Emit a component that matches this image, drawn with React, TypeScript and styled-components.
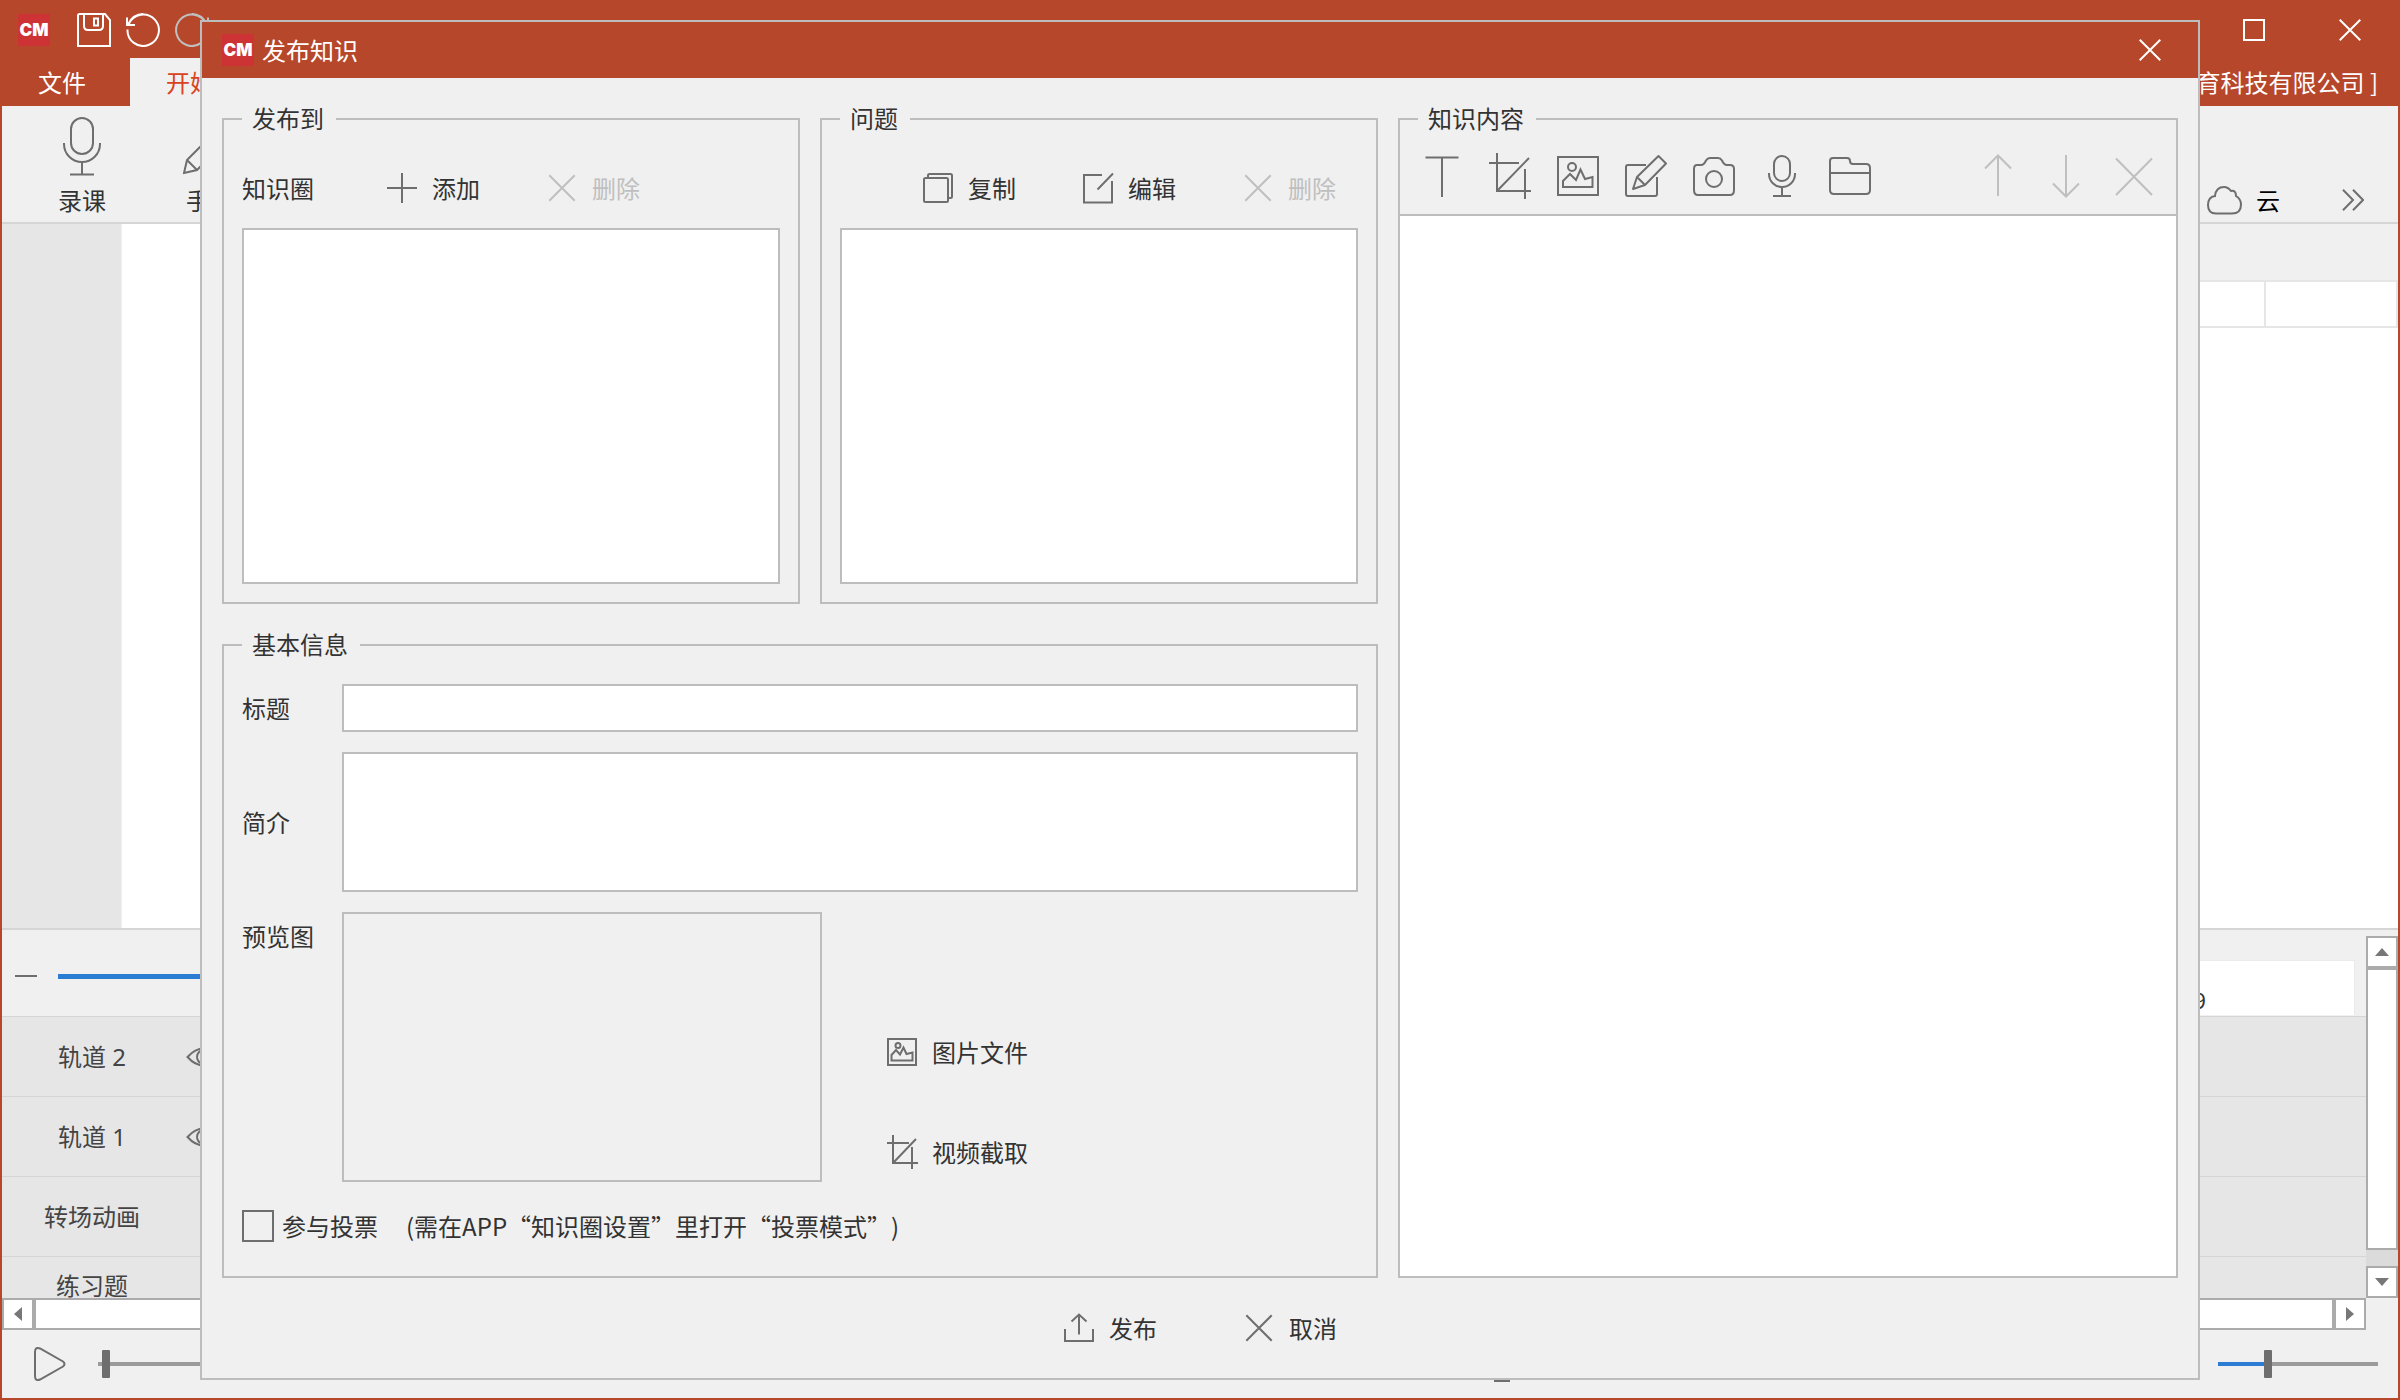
import React from "react";
import styled, { createGlobalStyle } from "styled-components";

const c = {
  brand: "#b7472a",
  logo: "#cd3234",
  panel: "#f0f0f0",
  strip: "#e6e6e6",
  line: "#d5d5d5",
  faint: "#e6e6e6",
  frame: "#bdbdbd",
  scroll: "#ababab",
  icon: "#6e6e6e",
  text: "#333333",
  muted: "#bfbfbf",
  blue: "#2b7cd3",
};

const GlobalStyle = createGlobalStyle`
  *, *::before, *::after { box-sizing: border-box; }
  body { margin: 0; overflow: hidden; }
  body, button, input, textarea {
    font-family: "Noto Sans CJK SC", "Noto Sans", sans-serif;
    font-size: 24px;
    line-height: 32px;
    color: ${c.text};
  }
  button { padding: 0; border: 0; background: none; }
`;

/* ---------- icons ---------- */

const Svg = styled.svg`
  display: block;
  flex: none;
  fill: none;
  stroke: currentColor;
  stroke-width: 2;
`;

type IconProps = { w: number; h?: number; children: React.ReactNode };
const Icon = ({ w, h = w, children }: IconProps) => (
  <Svg width={w} height={h} viewBox={`0 0 ${w} ${h}`} aria-hidden="true">
    {children}
  </Svg>
);

const SaveIcon = () => (
  <Icon w={34}>
    <path d="M1 2.5Q1 1 2.5 1H28l5 6V33H1ZM7 1V13Q7 17 11 17H22Q26 17 26 13V1M17 5.5H21V12.500H17Z" />
  </Icon>
);
const UndoIcon = () => (
  <Icon w={34}>
    <path d="M1.500 16.500A15.700 15.700 0 1 0 3 10.500M1 4.500V12H9M2 11.500Q7 1 17.200 1" />
  </Icon>
);
const RedoIcon = () => (
  <Icon w={34}>
    <path d="M32.500 16.500A15.700 15.700 0 1 1 31 10.500M33 4.500V12H25M32 11.500Q27 1 16.800 1" />
  </Icon>
);
const SmallCross = () => (
  <Icon w={22}>
    <path d="M.7.7 21.300 21.300M21.300.7.7 21.300" />
  </Icon>
);
const SquareIcon = () => (
  <Icon w={22}>
    <rect x="1" y="1" width="20" height="20" />
  </Icon>
);
const RibbonMic = () => (
  <Icon w={40} h={60}>
    <rect x="9" y="2" width="22" height="36" rx="11" />
    <path d="M2 27V28A18 18 0 0 0 38 28V27M20 46V58M8 58.500H32" />
  </Icon>
);
const RibbonPencil = () => (
  <Icon w={54} h={60}>
    <path d="M1 57 4 44 40 8Q43 5 46 8L50 12Q53 15 50 18L14 54ZM4 44 14 54" />
  </Icon>
);
const CloudIcon = () => (
  <Icon w={36} h={30}>
    <path d="M10 28.500Q2 28.500 2 20 2 12 9 11 10 2 18 2 22 2 25 6 30 5 30 11 35 14 35 19.500 35 28.500 26 28.500Z" />
  </Icon>
);
const ChevronsIcon = () => (
  <Icon w={22}>
    <path d="M1 .7 11 11 1 21.300M11 .7 21 11 11 21.300" />
  </Icon>
);
const PlusIcon = () => (
  <Icon w={32}>
    <path d="M1 16H31M16 1V31" />
  </Icon>
);
const CrossIcon = () => (
  <Icon w={32}>
    <path d="M3.300 3.300 28.700 28.700M28.700 3.300 3.300 28.700" />
  </Icon>
);
const CopyIcon = () => (
  <Icon w={32}>
    <rect x="2" y="6" width="24" height="24" rx="1.500" />
    <path d="M6 5V3.500Q6 2 7.500 2H28.500Q30 2 30 3.500V24.500Q30 26 28.500 26H27" />
  </Icon>
);
const EditIcon = () => (
  <Icon w={32}>
    <path d="M20 3H2V30.500H30V9M15.500 17.500 31 1.500" />
  </Icon>
);
const SmallPicture = () => (
  <Icon w={32}>
    <rect x="2" y="3" width="28" height="26" />
    <circle cx="12" cy="9.500" r="2.500" />
    <path d="M5.500 24.500V19L10 14 14 18.500 17.500 11.500 20.500 18 26.500 16.500V24.500Z" />
  </Icon>
);
const SmallCrop = () => (
  <Icon w={32} h={34}>
    <path d="M7 0V28H32M1 8H23M26 12V34M7 28 30 4" />
  </Icon>
);
const PublishIcon = () => (
  <Icon w={32}>
    <path d="M2 17V29H30V17M16 22.500V3M8.500 9.500 16 2.500 23.500 9.500" />
  </Icon>
);

const TextTool = () => (
  <Icon w={44}>
    <path d="M5.500 3.500H38.500M22 3V43" />
  </Icon>
);
const CropTool = () => (
  <Icon w={44} h={46}>
    <path d="M9 0V38H43M1 10H31M37 16V46M9 38 41 5" />
  </Icon>
);
const PictureTool = () => (
  <Icon w={44}>
    <rect x="2" y="3" width="40" height="38" />
    <circle cx="16" cy="13" r="4" />
    <path d="M7 33V27L14 20 20 26 24.500 15.500 29 25 36.500 23V33Z" />
  </Icon>
);
const ComposeTool = () => (
  <Icon w={44}>
    <path d="M22 11H4Q2 11 2 13V40Q2 42 4 42H31Q33 42 33 40V23" />
    <path d="M9 35 13 23 34.500 2 42 9.500 21 31ZM13 23 21 31" strokeLinejoin="round" />
  </Icon>
);
const CameraTool = () => (
  <Icon w={44}>
    <path d="M5 11H9Q12 11 14 6.500 15.500 4 18 4H26Q28.500 4 30 6.500 32 11 35 11H38Q42 11 42 15V36Q42 41 38 41H6Q2 41 2 36V15Q2 11 5 11Z" />
    <circle cx="22" cy="25" r="8" />
  </Icon>
);
const MicTool = () => (
  <Icon w={44}>
    <rect x="14" y="2" width="16" height="25" rx="8" />
    <path d="M9 19V20A13 13 0 0 0 35 20V19M22 33V42M13 42H31" />
  </Icon>
);
const FolderTool = () => (
  <Icon w={44}>
    <path d="M2 7Q2 4 5 4H19Q22 4 22 7 22 10 25 10H38Q42 10 42 14V36Q42 40 38 40H6Q2 40 2 36ZM2 19H42" />
  </Icon>
);
const UpTool = () => (
  <Icon w={44}>
    <path d="M22 42V2M9 14.500 22 1.500 35 14.500" />
  </Icon>
);
const DownTool = () => (
  <Icon w={44}>
    <path d="M22 1V41M9 29.500 22 42.500 35 29.500" />
  </Icon>
);
const CrossTool = () => (
  <Icon w={44}>
    <path d="M4 4.500 40 41M40 4.500 4 41" />
  </Icon>
);
const EyeIcon = () => (
  <Icon w={36} h={20}>
    <path d="M1.500 10Q9 1.500 18 1.500T34.500 10Q27 18.500 18 18.500T1.500 10Z" />
    <circle cx="18" cy="10" r="7" />
  </Icon>
);
const PlayIcon = () => (
  <Icon w={32} h={34}>
    <path d="M1 5Q1 -.5 6 1.500L29 14.500Q32 17 29 19.500L6 32.500Q1 34.500 1 29Z" />
  </Icon>
);
const StatusMic = () => (
  <Icon w={22} h={36}>
    <rect x="6" y="1" width="10" height="20" rx="5" />
    <path d="M2 17A9 9 0 0 0 20 17M11 26V34M3 35H19" />
  </Icon>
);
const FitIcon = () => (
  <Icon w={32} h={32}>
    <path d="M1 10V1H11M21 1H31V10M31 22V31H21M11 31H1V22" />
  </Icon>
);
const MinusIcon = () => (
  <Icon w={22}>
    <path d="M0 11H22" />
  </Icon>
);

const Triangle = ({ dir }: { dir: "up" | "down" | "left" | "right" }) => {
  const paths = {
    up: "M0 11 7 3 14 11Z",
    down: "M0 3 7 11 14 3Z",
    left: "M11 0 3 7 11 14Z",
    right: "M3 0 11 7 3 14Z",
  };
  return (
    <svg width="14" height="14" viewBox="0 0 14 14" fill="#777777" aria-hidden="true">
      <path d={paths[dir]} />
    </svg>
  );
};

/* ---------- main window ---------- */

const Window = styled.div`
  position: relative;
  display: flex;
  flex-direction: column;
  height: 100vh;
  border: 2px solid ${c.brand};
  background: ${c.panel};
  overflow: hidden;
`;

const TitleBar = styled.header`
  flex: none;
  display: flex;
  align-items: center;
  height: 56px;
  padding-left: 16px;
  background: ${c.brand};
  color: #ffffff;
`;

const Logo = styled.span`
  flex: none;
  display: flex;
  align-items: center;
  justify-content: center;
  width: 32px;
  height: 32px;
  background: ${c.logo};
  color: #ffffff;
  font-family: Inter, Roboto, sans-serif;
  font-size: 17px;
  font-weight: 900;
  line-height: 32px;
`;

const QuickActions = styled.div`
  display: flex;
  gap: 15px;
  margin-left: 27px;
`;

const IconButton = styled.button<{ $color?: string }>`
  display: flex;
  align-items: center;
  justify-content: center;
  color: ${(p) => p.$color ?? c.icon};
`;

const CaptionButtons = styled.div`
  display: flex;
  align-self: stretch;
  margin-left: auto;
`;

const CaptionButton = styled(IconButton)`
  width: 96px;
`;

const TabRow = styled.nav`
  flex: none;
  display: flex;
  height: 48px;
  background: ${c.brand};
`;

const Tab = styled.button<{ $active?: boolean }>`
  width: ${(p) => (p.$active ? 120 : 128)}px;
  padding: 0 16px 0 ${(p) => (p.$active ? 16 : 8)}px;
  background: ${(p) => (p.$active ? c.panel : "transparent")};
  color: ${(p) => (p.$active ? "#d9431e" : "#ffffff")};
`;

const Company = styled.span`
  margin-left: auto;
  padding-right: 20px;
  line-height: 48px;
  color: #ffffff;
  white-space: pre;
`;

const Ribbon = styled.div`
  flex: none;
  display: flex;
  justify-content: space-between;
  height: 118px;
  padding: 10px 34px 0 16px;
  border-bottom: 2px solid ${c.line};
`;

const RibbonGroup = styled.div`
  display: flex;
`;

const RibbonItem = styled.button`
  display: flex;
  flex-direction: column;
  align-items: center;
  gap: 8px;
  width: 128px;
  height: 100px;

  svg {
    color: ${c.icon};
  }
`;

const RibbonSide = styled.div`
  display: flex;
  align-items: flex-end;
  height: 100px;
  gap: 62px;
`;

const RibbonSideButton = styled.button`
  display: flex;
  align-items: center;
  gap: 14px;
  height: 32px;
  color: #000000;

  svg {
    color: ${c.icon};
  }
`;

const Stage = styled.main`
  flex: 1;
  min-height: 0;
  display: grid;
  grid-template-columns: 120px 1fr 480px;
`;

const Gutter = styled.div`
  background: ${c.strip};
  border-right: 1px solid ${c.panel};
`;

const Canvas = styled.div`
  background: #ffffff;
`;

const SidePane = styled.div`
  display: flex;
  flex-direction: column;
  background: #ffffff;
`;

const SideTabs = styled.div`
  height: 56px;
  background: ${c.panel};
`;

const SideHead = styled.div`
  display: grid;
  grid-template-columns: 1fr 132px;
  height: 48px;
  border: 2px solid ${c.faint};
  border-left: 0;
`;

const HeadCell = styled.div`
  & + & {
    border-left: 2px solid ${c.faint};
  }
`;

const Timeline = styled.section`
  flex: none;
  display: grid;
  grid-template-columns: 1fr 32px;
  grid-template-rows: 1fr 32px;
  height: 402px;
  border-top: 2px solid ${c.line};
`;

const TrackArea = styled.div`
  overflow: hidden;
  min-height: 0;
`;

const TrackHeader = styled.div`
  display: flex;
  align-items: center;
  height: 86px;
  padding: 6px 11px 0 13px;
  gap: 21px;
`;

const Ruler = styled.div`
  flex: 1;
  align-self: stretch;
  margin: 24px 0 1px;
  padding: 22px 148px 0 0;
  border: 1px solid #eaeaea;
  border-bottom: 0;
  background: #ffffff;
  font-size: 22px;
  text-align: right;
`;

const Track = styled.div<{ $short?: boolean }>`
  display: flex;
  align-items: center;
  height: ${(p) => (p.$short ? 58 : 80)}px;
  border-top: 1px solid ${c.line};
  background: ${c.strip};
  color: #444444;
`;

const TrackName = styled.span`
  width: 180px;
  font-family: "Noto Sans", "Noto Sans CJK SC", sans-serif;
  line-height: 24px;
  text-align: center;
`;

const EyeButton = styled(IconButton)`
  margin-left: 4px;
`;

const VScroll = styled.div`
  display: flex;
  flex-direction: column;
  margin-top: 6px;
  background: #dbdbdb;
`;

const HScroll = styled.div`
  display: flex;
`;

const ScrollButton = styled.button`
  flex: none;
  display: flex;
  align-items: center;
  justify-content: center;
  width: 32px;
  height: 32px;
  border: 2px solid ${c.scroll};
  background: #ffffff;
`;

const VThumb = styled.div`
  flex: 1;
  margin-bottom: 16px;
  border: 2px solid ${c.scroll};
  background: #ffffff;
`;

const HThumb = styled.div`
  flex: 1;
  border: 2px solid ${c.scroll};
  background: #ffffff;
`;

const StatusBar = styled.footer`
  flex: none;
  display: flex;
  align-items: center;
  height: 68px;
  padding: 0 20px 0 32px;
`;

const Spacer = styled.div`
  flex: 1;
`;

const StatusMicButton = styled(IconButton)`
  margin-right: 651px;
`;

const FitButton = styled(IconButton)`
  margin-right: 22px;
`;

const Slider = styled.input<{ $width: number; $fill: number; $hideThumb?: boolean }>`
  appearance: none;
  flex: none;
  width: ${(p) => p.$width}px;
  height: 28px;
  margin: 0;
  background: transparent;

  &::-webkit-slider-runnable-track {
    height: ${(p) => (p.$hideThumb ? 5 : 4)}px;
    background: linear-gradient(
      to right,
      ${c.blue} ${(p) => p.$fill}%,
      #9b9b9b ${(p) => p.$fill}%
    );
  }

  &::-webkit-slider-thumb {
    appearance: none;
    width: 8px;
    height: 28px;
    margin-top: -12px;
    border-radius: 1px;
    background: ${c.icon};
  }
`;

const PlayButton = styled(IconButton)`
  margin-right: 32px;
`;

/* ---------- dialog ---------- */

const Overlay = styled.div`
  position: absolute;
  inset: 20px 200px;
  display: flex;
`;

const Dialog = styled.div`
  flex: 1;
  display: flex;
  flex-direction: column;
  border: 2px solid ${c.frame};
  background: ${c.panel};
`;

const DialogTitle = styled.header`
  flex: none;
  display: flex;
  align-items: center;
  gap: 8px;
  height: 56px;
  padding-left: 20px;
  background: ${c.brand};
  color: #ffffff;
`;

const Heading = styled.h1`
  margin: 0;
  font-size: 24px;
  font-weight: 400;
`;

const DialogBody = styled.div`
  flex: 1;
  min-height: 0;
  display: grid;
  grid-template-columns: 1156fr 780fr;
  gap: 20px;
  padding: 22px 20px 0;
`;

const LeftColumn = styled.div`
  display: flex;
  flex-direction: column;
  gap: 22px;
  min-width: 0;
`;

const ListRow = styled.div`
  flex: 1;
  display: grid;
  grid-template-columns: 578fr 558fr;
  gap: 20px;
`;

const Group = styled.fieldset`
  display: flex;
  flex-direction: column;
  gap: 20px;
  min-width: 0;
  margin: 0;
  padding: 30px 18px 18px;
  border: 2px solid ${c.frame};
`;

const InfoGroup = styled(Group)`
  padding: 20px 18px 26px;
`;

const ContentGroup = styled(Group)`
  gap: 0;
  padding: 0;
`;

const Legend = styled.legend<{ $inset?: boolean }>`
  height: 38px;
  margin-left: ${(p) => (p.$inset ? 18 : 0)}px;
  padding: 0 12px 0 10px;
  line-height: 36px;
`;

const ListTools = styled.div<{ $end?: boolean }>`
  display: flex;
  align-items: center;
  justify-content: ${(p) => (p.$end ? "flex-end" : "flex-start")};
  gap: 66px;
  height: 40px;
  padding-right: 22px;
`;

const CircleLabel = styled.span`
  width: 78px;
`;

const ActionButton = styled.button`
  display: flex;
  align-items: center;
  gap: 14px;
  height: 40px;
  white-space: nowrap;

  svg {
    color: ${c.icon};
  }

  &:disabled,
  &:disabled svg {
    color: ${c.muted};
  }
`;

const ListBox = styled.div`
  flex: 1;
  border: 2px solid ${c.frame};
  background: #ffffff;
`;

const Field = styled.div`
  display: flex;
`;

const FieldLabel = styled.label<{ $h: number }>`
  flex: none;
  width: 100px;
  line-height: ${(p) => p.$h}px;
`;

const TextInput = styled.input`
  flex: 1;
  min-width: 0;
  height: 48px;
  padding: 0 8px;
  border: 2px solid ${c.frame};
  border-radius: 0;
  outline: 0;
  background: #ffffff;
`;

const TextArea = styled.textarea`
  flex: 1;
  min-width: 0;
  height: 140px;
  padding: 8px;
  border: 2px solid ${c.frame};
  border-radius: 0;
  outline: 0;
  resize: none;
  background: #ffffff;
`;

const Preview = styled.output`
  width: 480px;
  height: 270px;
  border: 2px solid ${c.frame};
`;

const PreviewActions = styled.div`
  display: flex;
  flex-direction: column;
  justify-content: flex-end;
  gap: 60px;
  padding-bottom: 10px;
  margin-left: 64px;
`;

const VoteRow = styled.label`
  display: flex;
  align-items: center;
  gap: 8px;
  height: 48px;
  white-space: nowrap;
`;

const CheckBox = styled.input`
  appearance: none;
  width: 32px;
  height: 32px;
  margin: 0;
  border: 2px solid ${c.icon};
`;

const VoteHint = styled.span`
  margin-left: 20px;
  text-spacing-trim: space-all;
`;

const ContentTools = styled.div`
  display: flex;
  align-items: center;
  gap: 24px;
  height: 78px;
  padding: 0 20px;
  border-bottom: 2px solid ${c.frame};
`;

const ToolButton = styled(IconButton)`
  width: 44px;
  height: 46px;

  &:disabled {
    color: ${c.muted};
  }
`;

const ContentArea = styled.div`
  flex: 1;
  background: #ffffff;
`;

const DialogFooter = styled.footer`
  flex: none;
  display: flex;
  align-items: center;
  justify-content: center;
  gap: 86px;
  height: 100px;
`;

const contentTools = [
  { label: "文本", Glyph: TextTool },
  { label: "截取", Glyph: CropTool },
  { label: "图片", Glyph: PictureTool },
  { label: "手写", Glyph: ComposeTool },
  { label: "拍照", Glyph: CameraTool },
  { label: "录音", Glyph: MicTool },
  { label: "文件", Glyph: FolderTool },
];

const orderTools = [
  { label: "上移", Glyph: UpTool },
  { label: "下移", Glyph: DownTool },
  { label: "删除", Glyph: CrossTool },
];

const tracks = [
  { name: "轨道 2", eye: true },
  { name: "轨道 1", eye: true },
  { name: "转场动画", eye: false },
  { name: "练习题", eye: false, short: true },
];

const PublishDialog = () => (
  <Overlay>
    <Dialog role="dialog" aria-labelledby="dialog-title">
      <DialogTitle>
        <Logo>CM</Logo>
        <Heading id="dialog-title">发布知识</Heading>
        <CaptionButtons>
          <CaptionButton $color="#ffffff" aria-label="关闭">
            <SmallCross />
          </CaptionButton>
        </CaptionButtons>
      </DialogTitle>

      <DialogBody>
        <LeftColumn>
          <ListRow>
            <Group>
              <Legend>发布到</Legend>
              <ListTools>
                <CircleLabel id="circle-label">知识圈</CircleLabel>
                <ActionButton>
                  <PlusIcon />
                  添加
                </ActionButton>
                <ActionButton disabled>
                  <CrossIcon />
                  删除
                </ActionButton>
              </ListTools>
              <ListBox role="listbox" aria-labelledby="circle-label" tabIndex={0} />
            </Group>
            <Group>
              <Legend>问题</Legend>
              <ListTools $end>
                <ActionButton>
                  <CopyIcon />
                  复制
                </ActionButton>
                <ActionButton>
                  <EditIcon />
                  编辑
                </ActionButton>
                <ActionButton disabled>
                  <CrossIcon />
                  删除
                </ActionButton>
              </ListTools>
              <ListBox role="listbox" aria-label="问题" tabIndex={0} />
            </Group>
          </ListRow>

          <InfoGroup>
            <Legend>基本信息</Legend>
            <Field>
              <FieldLabel $h={48} htmlFor="title">标题</FieldLabel>
              <TextInput id="title" type="text" />
            </Field>
            <Field>
              <FieldLabel $h={140} htmlFor="intro">简介</FieldLabel>
              <TextArea id="intro" />
            </Field>
            <Field>
              <FieldLabel $h={48} htmlFor="preview">预览图</FieldLabel>
              <Preview id="preview" />
              <PreviewActions>
                <ActionButton>
                  <SmallPicture />
                  图片文件
                </ActionButton>
                <ActionButton>
                  <SmallCrop />
                  视频截取
                </ActionButton>
              </PreviewActions>
            </Field>
            <VoteRow>
              <CheckBox type="checkbox" />
              参与投票
              <VoteHint>(需在APP“知识圈设置”里打开“投票模式”)</VoteHint>
            </VoteRow>
          </InfoGroup>
        </LeftColumn>

        <ContentGroup>
          <Legend $inset>知识内容</Legend>
          <ContentTools>
            {contentTools.map(({ label, Glyph }) => (
              <ToolButton key={label} aria-label={label}>
                <Glyph />
              </ToolButton>
            ))}
            <Spacer />
            {orderTools.map(({ label, Glyph }) => (
              <ToolButton key={label} aria-label={label} $color={c.muted} disabled>
                <Glyph />
              </ToolButton>
            ))}
          </ContentTools>
          <ContentArea />
        </ContentGroup>
      </DialogBody>

      <DialogFooter>
        <ActionButton>
          <PublishIcon />
          发布
        </ActionButton>
        <ActionButton>
          <CrossIcon />
          取消
        </ActionButton>
      </DialogFooter>
    </Dialog>
  </Overlay>
);

export default function App() {
  return (
    <>
      <GlobalStyle />
      <Window>
        <TitleBar>
          <Logo>CM</Logo>
          <QuickActions>
            <IconButton $color="#ffffff" aria-label="保存">
              <SaveIcon />
            </IconButton>
            <IconButton $color="#ffffff" aria-label="撤销">
              <UndoIcon />
            </IconButton>
            <IconButton $color="#bfbfbf" aria-label="重做">
              <RedoIcon />
            </IconButton>
          </QuickActions>
          <CaptionButtons>
            <CaptionButton $color="#ffffff" aria-label="最大化">
              <SquareIcon />
            </CaptionButton>
            <CaptionButton $color="#ffffff" aria-label="关闭窗口">
              <SmallCross />
            </CaptionButton>
          </CaptionButtons>
        </TitleBar>

        <TabRow>
          <Tab>文件</Tab>
          <Tab $active>开始</Tab>
          <Company>育科技有限公司 ]</Company>
        </TabRow>

        <Ribbon>
          <RibbonGroup>
            <RibbonItem>
              <RibbonMic />
              录课
            </RibbonItem>
            <RibbonItem>
              <RibbonPencil />
              手写
            </RibbonItem>
          </RibbonGroup>
          <RibbonSide>
            <RibbonSideButton>
              <CloudIcon />
              云
            </RibbonSideButton>
            <RibbonSideButton aria-label="更多">
              <ChevronsIcon />
            </RibbonSideButton>
          </RibbonSide>
        </Ribbon>

        <Stage>
          <Gutter />
          <Canvas />
          <SidePane>
            <SideTabs />
            <SideHead>
              <HeadCell />
              <HeadCell />
            </SideHead>
          </SidePane>
        </Stage>

        <Timeline>
          <TrackArea>
            <TrackHeader>
              <IconButton aria-label="缩小">
                <MinusIcon />
              </IconButton>
              <Slider
                type="range"
                aria-label="时间轴缩放"
                defaultValue={80}
                $width={240}
                $fill={80}
                $hideThumb
              />
              <Ruler>9</Ruler>
            </TrackHeader>
            {tracks.map((t) => (
              <Track key={t.name} $short={t.short}>
                <TrackName>{t.name}</TrackName>
                {t.eye && (
                  <EyeButton aria-label={`显示${t.name}`}>
                    <EyeIcon />
                  </EyeButton>
                )}
              </Track>
            ))}
          </TrackArea>
          <VScroll>
            <ScrollButton aria-label="向上">
              <Triangle dir="up" />
            </ScrollButton>
            <VThumb />
            <ScrollButton aria-label="向下">
              <Triangle dir="down" />
            </ScrollButton>
          </VScroll>
          <HScroll>
            <ScrollButton aria-label="向左">
              <Triangle dir="left" />
            </ScrollButton>
            <HThumb />
            <ScrollButton aria-label="向右">
              <Triangle dir="right" />
            </ScrollButton>
          </HScroll>
        </Timeline>

        <StatusBar>
          <PlayButton aria-label="播放">
            <PlayIcon />
          </PlayButton>
          <Slider type="range" aria-label="播放进度" defaultValue={1} $width={400} $fill={0} />
          <Spacer />
          <StatusMicButton aria-label="麦克风">
            <StatusMic />
          </StatusMicButton>
          <FitButton aria-label="适应窗口">
            <FitIcon />
          </FitButton>
          <Slider type="range" aria-label="音量" defaultValue={30} $width={160} $fill={30} />
        </StatusBar>
      </Window>
      <PublishDialog />
    </>
  );
}
